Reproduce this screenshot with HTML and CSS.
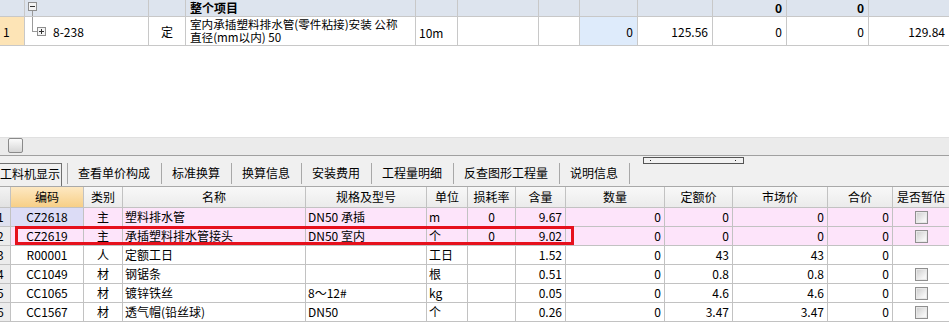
FILE: index.html
```html
<!DOCTYPE html>
<html lang="zh-CN">
<head>
<meta charset="utf-8">
<title>工料机显示</title>
<link rel="stylesheet" href="styles.css">
</head>
<body>
<div class="app">
  <div class="top">
    <div class="trow thead">
      <div class="tc"></div>
      <div class="tc tree">
        <svg width="14" height="16" viewBox="0 0 14 16">
          <rect x="3.5" y="2.5" width="8" height="8" fill="#f4f4f4" stroke="#8e8e8e"/>
          <line x1="5" y1="6.5" x2="10" y2="6.5" stroke="#333"/>
          <line x1="7.5" y1="11" x2="7.5" y2="16" stroke="#9a9a9a"/>
        </svg>
      </div>
      <div class="tc"></div>
      <div class="tc bold">整个项目</div>
      <div class="tc"></div>
      <div class="tc"></div>
      <div class="tc"></div>
      <div class="tc"></div>
      <div class="tc"></div>
      <div class="tc r bold">0</div>
      <div class="tc r bold">0</div>
      <div class="tc"></div>
    </div>
    <div class="trow tbody">
      <div class="tc num">1</div>
      <div class="tc tree">
        <svg width="22" height="28" viewBox="0 0 22 28">
          <line x1="7.5" y1="0" x2="7.5" y2="15" stroke="#9a9a9a"/>
          <line x1="7.5" y1="14.5" x2="12" y2="14.5" stroke="#9a9a9a"/>
          <rect x="12.5" y="10.5" width="8" height="8" fill="#f4f4f4" stroke="#8e8e8e"/>
          <line x1="14" y1="14.5" x2="19" y2="14.5" stroke="#333"/>
          <line x1="16.5" y1="12" x2="16.5" y2="17" stroke="#333"/>
        </svg>
        <span class="code">8-238</span>
      </div>
      <div class="tc c">定</div>
      <div class="tc name">室内承插塑料排水管(零件粘接)安装 公称<br>直径(mm以内) 50</div>
      <div class="tc unit">10m</div>
      <div class="tc"></div>
      <div class="tc"></div>
      <div class="tc r sel">0</div>
      <div class="tc r">125.56</div>
      <div class="tc r">0</div>
      <div class="tc r">0</div>
      <div class="tc r">129.84</div>
    </div>
  </div>

  <div class="blank"></div>

  <div class="splitter"><span class="split-btn"></span></div>

  <div class="tabs">
    <div class="tab active">工料机显示</div>
    <div class="tab">查看单价构成</div>
    <div class="tab">标准换算</div>
    <div class="tab">换算信息</div>
    <div class="tab">安装费用</div>
    <div class="tab">工程量明细</div>
    <div class="tab">反查图形工程量</div>
    <div class="tab">说明信息</div>
    <div class="tab empty"></div>
    <span class="thumb"></span>
  </div>

  <div class="grid">
    <div class="grow ghead">
      <div class="gc rn"></div>
      <div class="gc c hot">编码</div>
      <div class="gc c">类别</div>
      <div class="gc c">名称</div>
      <div class="gc c">规格及型号</div>
      <div class="gc c">单位</div>
      <div class="gc c">损耗率</div>
      <div class="gc c">含量</div>
      <div class="gc c">数量</div>
      <div class="gc c">定额价</div>
      <div class="gc c">市场价</div>
      <div class="gc c">合价</div>
      <div class="gc c">是否暂估</div>
    </div>

    <div class="grow pink">
      <div class="gc rn rn-sel"><span>1</span></div>
      <div class="gc c lav">CZ2618</div>
      <div class="gc c">主</div>
      <div class="gc">塑料排水管</div>
      <div class="gc">DN50 承插</div>
      <div class="gc">m</div>
      <div class="gc c">0</div>
      <div class="gc r">9.67</div>
      <div class="gc r">0</div>
      <div class="gc r">0</div>
      <div class="gc r">0</div>
      <div class="gc r">0</div>
      <div class="gc c"><span class="chk"></span></div>
    </div>

    <div class="grow pink">
      <div class="gc rn"><span>2</span></div>
      <div class="gc c">CZ2619</div>
      <div class="gc c">主</div>
      <div class="gc">承插塑料排水管接头</div>
      <div class="gc">DN50 室内</div>
      <div class="gc">个</div>
      <div class="gc c">0</div>
      <div class="gc r">9.02</div>
      <div class="gc r">0</div>
      <div class="gc r">0</div>
      <div class="gc r">0</div>
      <div class="gc r">0</div>
      <div class="gc c"><span class="chk"></span></div>
    </div>

    <div class="grow">
      <div class="gc rn"><span>3</span></div>
      <div class="gc c">R00001</div>
      <div class="gc c">人</div>
      <div class="gc">定额工日</div>
      <div class="gc"></div>
      <div class="gc">工日</div>
      <div class="gc c"></div>
      <div class="gc r">1.52</div>
      <div class="gc r">0</div>
      <div class="gc r">43</div>
      <div class="gc r">43</div>
      <div class="gc r">0</div>
      <div class="gc c"></div>
    </div>

    <div class="grow">
      <div class="gc rn"><span>4</span></div>
      <div class="gc c">CC1049</div>
      <div class="gc c">材</div>
      <div class="gc">钢锯条</div>
      <div class="gc"></div>
      <div class="gc">根</div>
      <div class="gc c"></div>
      <div class="gc r">0.51</div>
      <div class="gc r">0</div>
      <div class="gc r">0.8</div>
      <div class="gc r">0.8</div>
      <div class="gc r">0</div>
      <div class="gc c"><span class="chk"></span></div>
    </div>

    <div class="grow">
      <div class="gc rn"><span>5</span></div>
      <div class="gc c">CC1065</div>
      <div class="gc c">材</div>
      <div class="gc">镀锌铁丝</div>
      <div class="gc">8～12#</div>
      <div class="gc">kg</div>
      <div class="gc c"></div>
      <div class="gc r">0.05</div>
      <div class="gc r">0</div>
      <div class="gc r">4.6</div>
      <div class="gc r">4.6</div>
      <div class="gc r">0</div>
      <div class="gc c"><span class="chk"></span></div>
    </div>

    <div class="grow">
      <div class="gc rn"><span>6</span></div>
      <div class="gc c">CC1567</div>
      <div class="gc c">材</div>
      <div class="gc">透气帽(铅丝球)</div>
      <div class="gc">DN50</div>
      <div class="gc">个</div>
      <div class="gc c"></div>
      <div class="gc r">0.26</div>
      <div class="gc r">0</div>
      <div class="gc r">3.47</div>
      <div class="gc r">3.47</div>
      <div class="gc r">0</div>
      <div class="gc c"><span class="chk"></span></div>
    </div>
  </div>

  <div class="highlight"></div>
</div>
</body>
</html>
```

FILE: styles.css
```css
* { box-sizing: border-box; }

html, body {
  margin: 0;
  padding: 0;
  background: #ffffff;
}

body {
  font-family: "Noto Sans CJK SC", "Noto Sans", sans-serif;
  font-size: 12px;
  color: #000;
  width: 949px;
  height: 323px;
  overflow: hidden;
}

.app {
  position: relative;
  width: 949px;
}

/* ---------- top table ---------- */
.trow {
  display: grid;
  grid-template-columns: 25px 124px 37px 230px 42px 81px 41px 58px 75px 74px 82px 80px;
  border-bottom: 1px solid #c8c8c8;
}

.thead {
  height: 17px;
  background: #dde4ee;
  line-height: 16px;
}

.tbody {
  height: 29px;
  line-height: 13px;
}

.tc {
  border-right: 1px solid #c8c8c8;
  display: flex;
  align-items: center;
  padding: 0 4px;
  white-space: nowrap;
  overflow: hidden;
}

.tc:last-child { border-right: none; }

.tc.r { justify-content: flex-end; }
.tc.c { justify-content: center; }
.tc.bold { font-weight: bold; }

.tc.num {
  background: #fde4b6;
  padding-left: 3px;
}

.tc.tree {
  padding: 0;
  align-items: flex-start;
}

.tc.tree svg { display: block; flex: none; }

.tc.tree .code {
  margin-left: 6px;
  align-self: center;
}

.tc.name {
  align-items: center;
  font-size: 11.6px;
}

.tc.unit { padding-left: 3px; padding-top: 2px; }

.tc.sel { background: #deebfb; }

/* ---------- blank area ---------- */
.blank { height: 91px; }

/* ---------- splitter ---------- */
.splitter {
  height: 18px;
  background: #ebebeb;
  border-top: 1px solid #e0e0e0;
  padding-left: 8px;
}

.split-btn {
  display: block;
  width: 15px;
  height: 15px;
  border: 1px solid #8a8a8a;
  border-radius: 2px;
  background: linear-gradient(#fbfbfb, #d6d6d6);
}

/* ---------- tabs ---------- */
.tabs {
  position: relative;
  display: flex;
  align-items: flex-start;
  height: 32px;
  padding-top: 7px;
  background: #f0f0f0;
  border-top: 1px solid #a0a0a0;
  border-bottom: 1px solid #a9a9a9;
}

.tab {
  height: 21px;
  line-height: 20px;
  padding: 0 11px 0 10px;
  border-left: 1px solid #a8a8a8;
  white-space: nowrap;
}

.tab.active {
  height: 23px;
  padding: 0 1px 0 0;
  margin-right: 5px;
  border-left: none;
  border-top: 1px solid #707070;
  border-right: 1px solid #707070;
  line-height: 20px;
}

.tab.empty { padding: 0; width: 1px; }

.thumb {
  position: absolute;
  left: 643px;
  top: 1px;
  width: 101px;
  height: 7px;
  border: 1px solid #555;
  background: #f2f2f2;
}

.thumb::before,
.thumb::after {
  content: "";
  position: absolute;
  top: 2px;
  width: 1px;
  height: 1px;
  background: #222;
}

.thumb::before { left: 6px; }
.thumb::after { right: 7px; }

/* ---------- bottom grid ---------- */
.grow {
  display: grid;
  grid-template-columns: 11px 73px 39px 183px 121px 41px 48px 50px 99px 68px 95px 65px 56px;
  height: 19px;
  border-bottom: 1px solid #c2c2c2;
  line-height: 18px;
}

.ghead {
  height: 21px;
  background: linear-gradient(#f8f8f8, #ebebeb);
  line-height: 20px;
}

.gc {
  border-right: 1px solid #c2c2c2;
  display: flex;
  align-items: center;
  padding: 0 2px;
  white-space: nowrap;
  overflow: hidden;
}

.gc:last-child { border-right: none; }

.gc.c { justify-content: center; }
.gc.r { justify-content: flex-end; padding-right: 3px; }

.gc.hot { background: linear-gradient(#fde8c2, #f7cf87); }

.gc.rn {
  padding: 0;
  background: #ececec;
}

.gc.rn span { margin-left: -3px; }

.ghead .gc.rn { background: linear-gradient(#f3f3f3, #e2e2e2); }

.pink { background: #fde4fa; }

.gc.rn-sel { background: #dfe1ef; }

.gc.lav { background: #dcdcf6; }

.chk {
  display: block;
  width: 13px;
  height: 13px;
  border: 1px solid #8f8f8f;
  background: linear-gradient(135deg, #cbcbcb, #f6f6f6 75%);
  box-shadow: inset 0 0 0 1px #e8e8e8;
}

/* ---------- red highlight overlay ---------- */
.highlight {
  position: absolute;
  left: 15px;
  top: 226px;
  width: 559px;
  height: 19px;
  border: 3px solid #e6101c;
  pointer-events: none;
}
```
